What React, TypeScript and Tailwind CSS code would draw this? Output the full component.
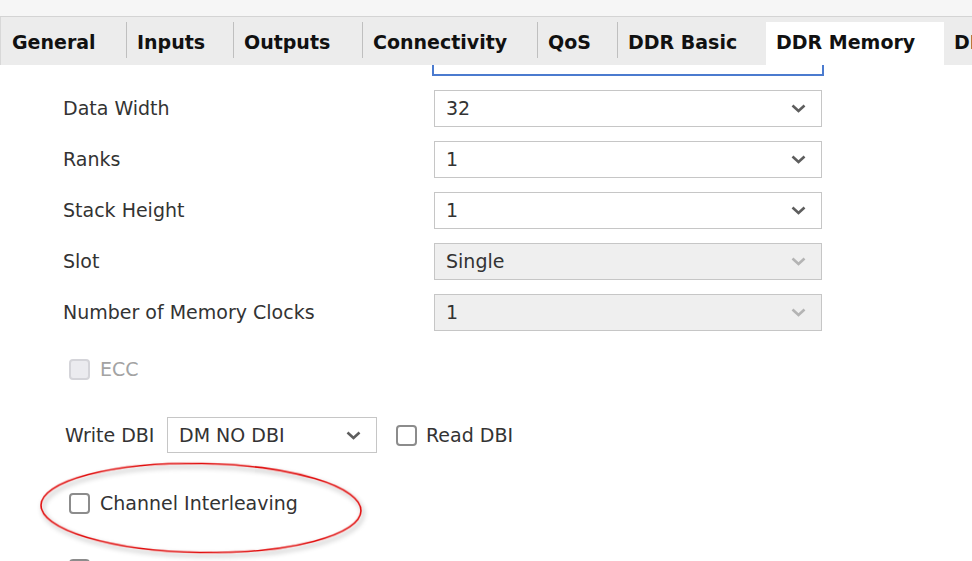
import React from "react";

const tabs = [
  { name: "General", w: "w-[124px]" },
  { name: "Inputs", w: "w-[106px]" },
  { name: "Outputs", w: "w-[128px]" },
  { name: "Connectivity", w: "w-[174px]" },
  { name: "QoS", w: "w-[79px]" },
  { name: "DDR Basic", w: "w-[148px]" },
  { name: "DDR Memory", w: "w-[178px]", active: true },
  { name: "DDR Advanced", w: "w-[200px]" },
];

const rows = [
  { label: "Data Width", value: "32" },
  { label: "Ranks", value: "1" },
  { label: "Stack Height", value: "1" },
  { label: "Slot", value: "Single", disabled: true },
  { label: "Number of Memory Clocks", value: "1", disabled: true },
];

function Chevron({ light }: { light?: boolean }) {
  return (
    <svg width="15" height="9" viewBox="0 0 15 9" className="shrink-0">
      <polyline
        points="1.5,1.5 7.5,7 13.5,1.5"
        fill="none"
        stroke={light ? "#b4b4b4" : "#5e5e5e"}
        strokeWidth="2.6"
      />
    </svg>
  );
}

function Checkbox({ disabled }: { disabled?: boolean }) {
  return (
    <div
      className={
        disabled
          ? "w-[21px] h-[21px] rounded-[4px] border-2 border-[#d4d4d9] bg-[#ebebef] shrink-0"
          : "w-[21px] h-[21px] rounded-[4px] border-2 border-[#8c8c8c] bg-white shrink-0"
      }
    />
  );
}

export default function App() {
  return (
    <div
      className="relative w-[972px] h-[561px] overflow-hidden bg-white text-[#333]"
      style={{ fontFamily: '"DejaVu Sans", Verdana, sans-serif' }}
    >
      {/* top strip */}
      <div className="h-[17px] bg-[#f6f6f6] border-b border-[#d4d4d4]" />

      {/* tab bar */}
      <div className="h-[48px] bg-[#ececec] flex items-start pt-[5px] pl-[1px] border-l border-[#d8d8d8]">
        {tabs.map((t, i) => (
          <div key={t.name} className="flex items-start shrink-0">
            {i > 0 && !t.active && !tabs[i - 1].active && (
              <div className="w-px h-[36px] bg-[#bfbfbf]" />
            )}
            <div
              className={`${t.w} h-[43px] flex items-center pl-[10px] pb-[3px] text-[19px] font-bold text-[#111] whitespace-nowrap overflow-hidden ${
                t.active ? "bg-white" : ""
              }`}
            >
              {t.name}
            </div>
          </div>
        ))}
      </div>

      {/* content */}
      <div className="flex flex-col">
        <div className="ml-[432px] w-[392px] h-[11px] border-2 border-t-0 border-[#4b7bcf]" />

        <div className="flex flex-col gap-[14px] mt-[14px]">
          {rows.map((r) => (
            <div key={r.label} className="flex items-center h-[37px]">
              <div className="w-[434px] pl-[63px] text-[19px] whitespace-nowrap">
                {r.label}
              </div>
              <div
                className={`w-[388px] h-[37px] border border-[#c6c6c6] flex items-center justify-between pl-[11px] pr-[15px] text-[19px] ${
                  r.disabled ? "bg-[#efefef]" : "bg-white"
                }`}
              >
                <span>{r.value}</span>
                <Chevron light={r.disabled} />
              </div>
            </div>
          ))}
        </div>

        <div className="flex items-center gap-[10px] pl-[69px] mt-[27px] h-[22px]">
          <Checkbox disabled />
          <span className="text-[19px] text-[#a3a3a3]">ECC</span>
        </div>

        <div className="flex items-center pl-[65px] mt-[37px] h-[36px]">
          <span className="text-[19px] w-[102px] whitespace-nowrap">Write DBI</span>
          <div className="w-[210px] h-[36px] border border-[#c6c6c6] bg-white flex items-center justify-between pl-[11px] pr-[15px] text-[19px]">
            <span>DM NO DBI</span>
            <Chevron />
          </div>
          <div className="flex items-center gap-[9px] ml-[19px]">
            <Checkbox />
            <span className="text-[19px]">Read DBI</span>
          </div>
        </div>

        <div className="flex items-center gap-[10px] pl-[69px] mt-[39px] h-[22px]">
          <Checkbox />
          <span className="text-[19px]">Channel Interleaving</span>
        </div>

        <div className="flex items-center pl-[69px] mt-[44px] h-[22px]">
          <Checkbox />
        </div>
      </div>

      {/* red annotation ellipse */}
      <svg
        className="absolute left-[34px] top-[456px] pointer-events-none"
        width="340"
        height="108"
        viewBox="0 0 340 108"
      >
        <defs>
          <filter id="sh" x="-10%" y="-20%" width="120%" height="150%">
            <feDropShadow dx="2" dy="3" stdDeviation="2.5" floodColor="#000" floodOpacity="0.4" />
          </filter>
        </defs>
        <ellipse
          cx="167"
          cy="52"
          rx="160"
          ry="44.5"
          fill="none"
          stroke="#e01010"
          strokeWidth="1.6"
          filter="url(#sh)"
          transform="rotate(1 167 52)"
        />
      </svg>
    </div>
  );
}
